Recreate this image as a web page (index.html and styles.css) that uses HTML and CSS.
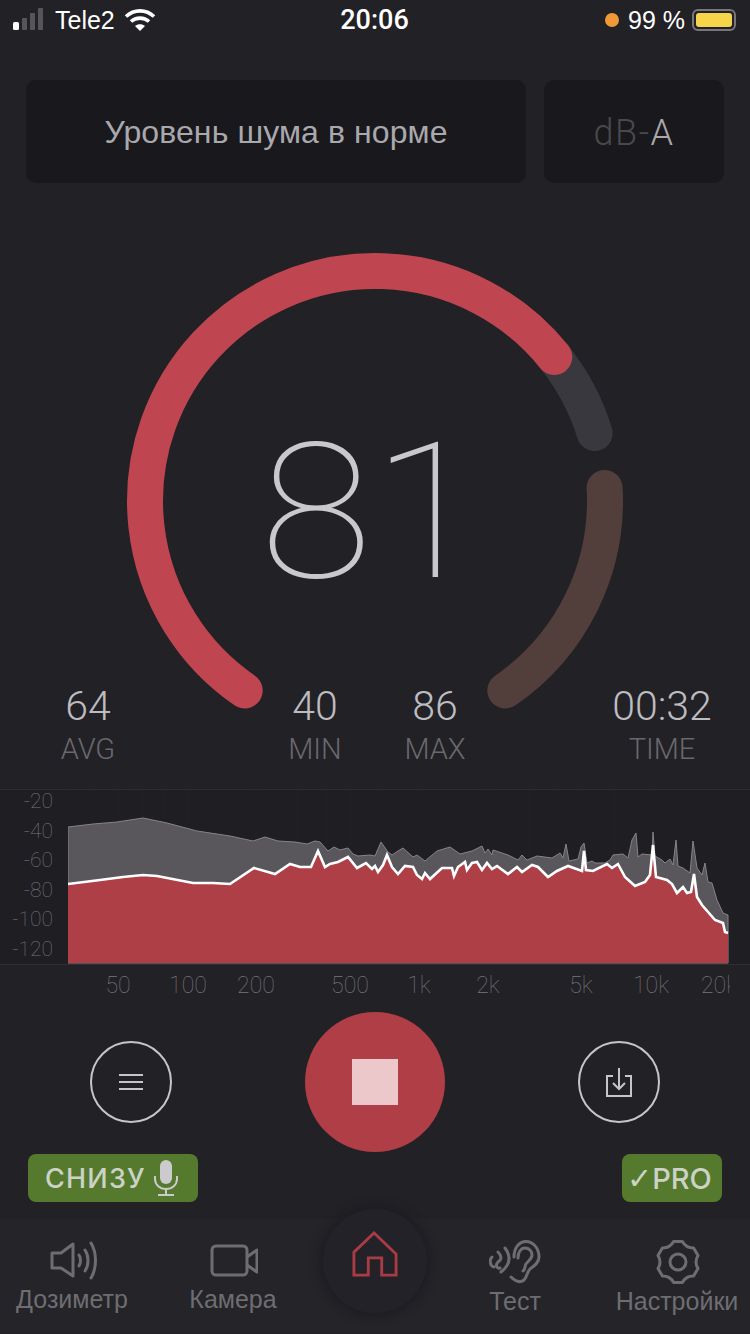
FILE: index.html
```html
<!DOCTYPE html>
<html lang="ru">
<head>
    <meta charset="UTF-8">
    <title>Дозиметр</title>
    <link rel="stylesheet" href="styles.css">
</head>
<body>
<div class="screen">
    <!-- status bar -->
    <div class="status">
        <div class="status-left">
            <svg class="signal" width="34" height="24" viewBox="0 0 34 24">
                <rect x="0" y="14" width="6" height="8" rx="1.5" fill="#fff"/>
                <rect x="9" y="10" width="5" height="12" rx="1" fill="#56555a"/>
                <rect x="17" y="5" width="5" height="17" rx="1" fill="#56555a"/>
                <rect x="25" y="0" width="5" height="22" rx="1" fill="#56555a"/>
            </svg>
            <span class="carrier">Tele2</span>
            <svg class="wifi" width="32" height="24" viewBox="0 0 32 24">
                <path d="M2 8.5C10 1 22 1 30 8.5" fill="none" stroke="#fff" stroke-width="3.6"/>
                <path d="M7 13.5C12 9 20 9 25 13.5" fill="none" stroke="#fff" stroke-width="3.6"/>
                <path d="M11 18C14 15.500 18 15.500 21 18L16 23Z" fill="#fff"/>
            </svg>
        </div>
        <div class="status-time">20:06</div>
        <div class="status-right">
            <span class="dot"></span>
            <span class="percent">99 %</span>
            <span class="battery"><span class="battery-fill"></span></span>
        </div>
    </div>

    <!-- message row -->
    <div class="message-row">
        <div class="message">Уровень шума в норме</div>
        <div class="weight"><span class="weight-off">dB-</span>A</div>
    </div>

    <!-- gauge -->
    <div class="gauge">
        <svg class="gauge-ring" width="750" height="606" viewBox="0 0 750 606">
            <path d="M554.300 173.900A230 230 0 0 1 594.700 250.100" fill="none" stroke="#39383e" stroke-width="36" stroke-linecap="round"/>
            <path d="M604.600 305A230 230 0 0 1 505.300 507.500" fill="none" stroke="#523f3c" stroke-width="36" stroke-linecap="round"/>
            <path d="M244.700 507.500A230 230 0 1 1 554.300 173.900" fill="none" stroke="#bf4650" stroke-width="36" stroke-linecap="round"/>
        </svg>
        <div class="gauge-value">81</div>
        <div class="stats">
            <div class="stat"><div class="stat-value">64</div><div class="stat-label">AVG</div></div>
            <div class="stat-pair">
                <div class="stat"><div class="stat-value">40</div><div class="stat-label">MIN</div></div>
                <div class="stat"><div class="stat-value">86</div><div class="stat-label">MAX</div></div>
            </div>
            <div class="stat"><div class="stat-value">00:32</div><div class="stat-label">TIME</div></div>
        </div>
    </div>

    <!-- spectrum -->
    <div class="spectrum">
        <div class="plot-row">
            <div class="y-axis">
                <span>-20</span><span>-40</span><span>-60</span><span>-80</span><span>-100</span><span>-120</span>
            </div>
            <svg class="plot" width="682" height="175" viewBox="68 790 682 175">
                <path class="grid" d="M68 790V963M93 790V963M118 790V963M131 790V963M143 790V963M164 790V963M188 790V963M256 790V963M297 790V963M326 790V963M350 790V963M381 790V963M419 790V963M488 790V963M530 790V963M557 790V963M581 790V963M614 790V963M651 790V963"/>
                <path class="peak-fill" d="M68 827L93 824L117 822L143 818L167 823L197 831L230 836L253 841L265 837L278 841L295 842L307 844L315 841L320 842L328 851L334 847L340 850L348 848L353 854L358 856L370 855L375 856L381 842L388 852L392 855L398 851L403 848L413 857L417 855L425 861L437 851L450 847L460 854L472 851L482 846L485 853L488 849L492 855L493 850L508 855L518 860L522 855L527 860L537 856L552 858L560 853L563 858L566 844L569 861L578 859L581 847L584 843L587 863L592 861L595 863L605 863L610 860L613 855L623 854L628 858L632 840L636 833L638 857L642 854L652 855L653 832L655 856L662 860L665 863L670 859L673 865L676 840L678 866L683 868L690 873L693 841L697 868L702 875L705 863L708 882L712 883L717 900L723 913L728 915V963H68Z"/>
                <path class="level-fill" d="M68 884L100 880L123 877L143 875L157 876L193 883L213 883L230 884L254 868L275 874L290 864L300 867L311 867L318 851L325 867L330 864L338 862L348 857L357 868L366 863L372 869L375 866L378 872L383 865L387 855L392 867L398 874L405 866L413 867L417 875L422 879L425 873L430 879L442 868L452 868L454 876L458 867L465 862L467 870L472 863L477 862L482 870L487 863L492 869L497 866L508 874L517 867L522 872L532 865L538 867L548 877L557 871L568 866L582 871L584 851L586 870L593 871L607 864L612 868L618 864L625 877L635 886L645 882L650 875L653 845L656 877L667 880L672 884L677 893L683 887L687 893L691 892L694 874L697 897L702 905L715 920L723 923L725 932L728 933V963H68Z"/>
                <path class="level-line" d="M68 884L100 880L123 877L143 875L157 876L193 883L213 883L230 884L254 868L275 874L290 864L300 867L311 867L318 851L325 867L330 864L338 862L348 857L357 868L366 863L372 869L375 866L378 872L383 865L387 855L392 867L398 874L405 866L413 867L417 875L422 879L425 873L430 879L442 868L452 868L454 876L458 867L465 862L467 870L472 863L477 862L482 870L487 863L492 869L497 866L508 874L517 867L522 872L532 865L538 867L548 877L557 871L568 866L582 871L584 851L586 870L593 871L607 864L612 868L618 864L625 877L635 886L645 882L650 875L653 845L656 877L667 880L672 884L677 893L683 887L687 893L691 892L694 874L697 897L702 905L715 920L723 923L725 932L728 933"/>
            </svg>
        </div>
        <div class="x-axis">
            <span style="left:118px">50</span>
            <span style="left:188px">100</span>
            <span style="left:256px">200</span>
            <span style="left:350px">500</span>
            <span style="left:419px">1k</span>
            <span style="left:488px">2k</span>
            <span style="left:581px">5k</span>
            <span style="left:651px">10k</span>
            <span style="left:719px">20k</span>
        </div>
    </div>

    <!-- controls -->
    <div class="controls">
        <div class="round-btn">
            <svg width="26" height="18" viewBox="0 0 26 18">
                <path d="M1 2H25M1 9H25M1 16H25" stroke="#c6c5c9" stroke-width="2" fill="none"/>
            </svg>
        </div>
        <div class="stop-btn"><span class="stop-square"></span></div>
        <div class="round-btn">
            <svg width="26" height="30" viewBox="0 0 26 30">
                <path d="M7 9H1V29H25V9H19" stroke="#c6c5c9" stroke-width="2" fill="none"/>
                <path d="M13 1V22M7 16L13 22L19 16" stroke="#c6c5c9" stroke-width="2" fill="none"/>
            </svg>
        </div>
    </div>

    <!-- badges -->
    <div class="badges">
        <div class="badge badge-mic">
            <span>СНИЗУ</span>
            <svg width="26" height="36" viewBox="0 0 26 36">
                <rect x="7" y="0" width="12" height="24" rx="6" fill="#cbcbcd"/>
                <path d="M2 16V19C2 25 7 29 13 29C19 29 24 25 24 19V16M13 29V35M5 35H21" stroke="#cbcbcd" stroke-width="2" fill="none"/>
            </svg>
        </div>
        <div class="badge badge-pro"><span class="tick">✓</span>PRO</div>
    </div>

    <!-- tab bar -->
    <div class="tabbar">
        <div class="tab">
            <svg width="50" height="42" viewBox="-3 0 50 42">
                <path d="M2 13H11L23 4V36L11 28H2Z" fill="none" stroke="#6e6d72" stroke-width="3" stroke-linejoin="round"/>
                <path d="M29 15C31 18 31 23 29 26M35 10C39 16 39 25 35 31M41 3C47 13 47 28 41 38" fill="none" stroke="#6e6d72" stroke-width="3" stroke-linecap="round"/>
            </svg>
            <span>Дозиметр</span>
        </div>
        <div class="tab">
            <svg width="50" height="42" viewBox="-1 0 50 42">
                <rect x="3" y="6" width="35" height="29" rx="4" fill="none" stroke="#6e6d72" stroke-width="3"/>
                <path d="M38 17L48 10V32L38 25" fill="none" stroke="#6e6d72" stroke-width="3" stroke-linejoin="round"/>
            </svg>
            <span>Камера</span>
        </div>
        <div class="home">
            <svg width="46" height="48" viewBox="0 0 48 50">
                <path d="M2 46V22L23 2L46 24V46H31V28H17V46Z" fill="none" stroke="#a93b43" stroke-width="3"/>
            </svg>
        </div>
        <div class="tab">
            <svg width="52" height="44" viewBox="0 0 52 44">
                <path d="M25 17C25 8 30 1.500 37 1.500C44 1.500 50 8 50 17C50 23 45 26 41 29C38 32 38 37 35 40C31 43 26 41 22 37" fill="none" stroke="#6e6d72" stroke-width="3" stroke-linecap="round"/>
                <path d="M29 18C29 12 32 8 36 8C40 8 43 11 43 15C43 19 39 21 37 24C35 27 37 29 34 31" fill="none" stroke="#6e6d72" stroke-width="3" stroke-linecap="round"/>
                <path d="M16 8C22 16 22 24 12 32M9 12C13 16 13 19 9 22C6 25 8 29 11 28M3 17C0 20 1 26 5 27" fill="none" stroke="#6e6d72" stroke-width="3" stroke-linecap="round"/>
            </svg>
            <span>Тест</span>
        </div>
        <div class="tab">
            <svg width="50" height="44" viewBox="-26 -22 50 44">
                <path d="M-4.400 -20.500L4.400 -20.500Q8 -13.900 15.600 -14.100L20 -6.500Q16 0 20 6.500L15.600 14.100Q8 13.900 4.400 20.500L-4.400 20.500Q-8 13.900 -15.600 14.100L-20 6.500Q-16 0 -20 -6.500L-15.600 -14.100Q-8 -13.900 -4.400 -20.500Z" fill="none" stroke="#6e6d72" stroke-width="3" stroke-linejoin="round"/>
                <circle r="8" fill="none" stroke="#6e6d72" stroke-width="3"/>
            </svg>
            <span>Настройки</span>
        </div>
    </div>
</div>
</body>
</html>
```

FILE: styles.css
```css
* {
    margin: 0;
    padding: 0;
    box-sizing: border-box;
}

body {
    background-color: #222126;
    font-family: "Liberation Sans", "Noto Sans", sans-serif;
}

.screen {
    width: 750px;
    height: 1334px;
    overflow: hidden;
    display: flex;
    flex-direction: column;
}

/* status bar */
.status {
    height: 40px;
    padding: 0 14px 0 13px;
    display: grid;
    grid-template-columns: 1fr auto 1fr;
    align-items: center;
    color: #fff;
    font-size: 25px;
}

.status-left,
.status-right {
    display: flex;
    align-items: center;
}

.status-right {
    justify-content: flex-end;
}

.carrier {
    margin-left: 8px;
    margin-right: 9px;
}

.status-time {
    font-family: "Roboto", sans-serif;
    font-weight: 500;
    font-size: 27px;
}

.dot {
    width: 14px;
    height: 14px;
    border-radius: 50%;
    background-color: #f09a37;
    margin-right: 9px;
}

.percent {
    margin-right: 7px;
}

.battery {
    width: 44px;
    height: 22px;
    border: 2px solid #77767a;
    border-radius: 6px;
    padding: 2px;
    display: flex;
}

.battery-fill {
    flex: 1;
    background-color: #f7d54a;
    border-radius: 3px;
}

/* message row */
.message-row {
    margin-top: 40px;
    padding: 0 26px;
    display: flex;
    gap: 18px;
}

.message,
.weight {
    height: 103px;
    padding-top: 2px;
    background-color: #19181c;
    border-radius: 10px;
    display: flex;
    align-items: center;
    justify-content: center;
    color: #a9a8ad;
}

.message {
    width: 500px;
    font-size: 32px;
    letter-spacing: 0.1px;
}

.weight {
    width: 180px;
    font-size: 36px;
    letter-spacing: 1.5px;
    font-family: "Roboto", sans-serif;
    font-weight: 300;
}

.weight-off {
    color: #49484d;
}

/* gauge */
.gauge {
    height: 606px;
    display: grid;
}

.gauge-ring,
.gauge-value,
.stats {
    grid-area: 1 / 1;
}

.gauge-value {
    justify-self: center;
    margin-top: 216px;
    margin-right: 6px;
    font-family: "Roboto", sans-serif;
    font-weight: 100;
    font-size: 190px;
    line-height: 226px;
    color: #c9c8cc;
    transform: scaleX(1.08);
}

.stats {
    align-self: end;
    padding: 0 28px 19px;
    display: flex;
    justify-content: space-between;
}

.stat-pair {
    display: flex;
}

.stat {
    width: 120px;
    text-align: center;
    font-family: "Roboto", sans-serif;
    font-weight: 300;
}

.stat-value {
    font-size: 41px;
    line-height: 44px;
    color: #bdbcc0;
}

.stat-label {
    font-size: 29px;
    line-height: 42px;
    color: #69686d;
}

/* spectrum */
.spectrum {
    border-top: 1px solid #2d2c31;
}

.plot-row {
    height: 175px;
    display: flex;
    background-color: #1f1e23;
    border-bottom: 1px solid #2f2e33;
}

.y-axis {
    width: 68px;
    padding-right: 15px;
    display: flex;
    flex-direction: column;
    align-items: flex-end;
    gap: 7.6px;
    font-family: "Roboto", sans-serif;
    font-weight: 100;
    font-size: 21px;
    line-height: 22px;
    color: #77767b;
}

.plot {
    display: block;
}

.grid {
    stroke: #232227;
    stroke-width: 1;
    fill: none;
}

.peak-fill {
    fill: #59575c;
    stroke: #858488;
    stroke-width: 1;
}

.level-fill {
    fill: #ae3f47;
}

.level-line {
    fill: none;
    stroke: #fff;
    stroke-width: 2.6;
}

.x-axis {
    width: 730px;
    height: 44px;
    position: relative;
    overflow: hidden;
    font-family: "Roboto", sans-serif;
    font-weight: 100;
    font-size: 23px;
    color: #77767b;
}

.x-axis span {
    position: absolute;
    top: 7px;
    transform: translateX(-50%);
}

/* controls */
.controls {
    height: 142px;
    margin-top: 2px;
    padding: 0 90px;
    display: flex;
    align-items: center;
    justify-content: space-between;
}

.round-btn {
    width: 82px;
    height: 82px;
    border: 2px solid #c6c5c9;
    border-radius: 50%;
    display: flex;
    align-items: center;
    justify-content: center;
}

.stop-btn {
    width: 140px;
    height: 140px;
    border-radius: 50%;
    background-color: #b03e46;
    display: flex;
    align-items: center;
    justify-content: center;
}

.stop-square {
    width: 46px;
    height: 46px;
    background-color: #ecc8ca;
}

/* badges */
.badges {
    padding: 1px 28px 0;
    display: flex;
    justify-content: space-between;
}

.badge {
    height: 48px;
    background-color: #557a2e;
    border-radius: 8px;
    display: flex;
    align-items: center;
    color: #ccd2c6;
    font-family: "Inter", sans-serif;
    font-weight: 500;
    font-size: 27px;
}

.badge-mic {
    width: 170px;
    padding-left: 17px;
    gap: 7px;
    letter-spacing: 1.2px;
}

.badge-pro {
    width: 100px;
    padding-left: 5px;
    font-size: 29px;
}

.tick {
    font-family: "DejaVu Sans", sans-serif;
    font-weight: 400;
    font-size: 30px;
}

/* tab bar */
.tabbar {
    height: 114px;
    margin-top: 17px;
    background-color: #252429;
    display: grid;
    grid-template-columns: 144px 178px 106px 174px 150px;
    align-items: start;
}

.tab {
    padding-top: 21px;
    display: flex;
    flex-direction: column;
    align-items: center;
    font-size: 25px;
    line-height: 34px;
    color: #6e6d72;
}

.home {
    width: 104px;
    height: 104px;
    margin-top: -10px;
    justify-self: center;
    border-radius: 50%;
    background-color: #232228;
    box-shadow: 0 0 8px 4px #1e1d22;
    display: flex;
    align-items: center;
    justify-content: center;
    padding-bottom: 12px;
}
```
